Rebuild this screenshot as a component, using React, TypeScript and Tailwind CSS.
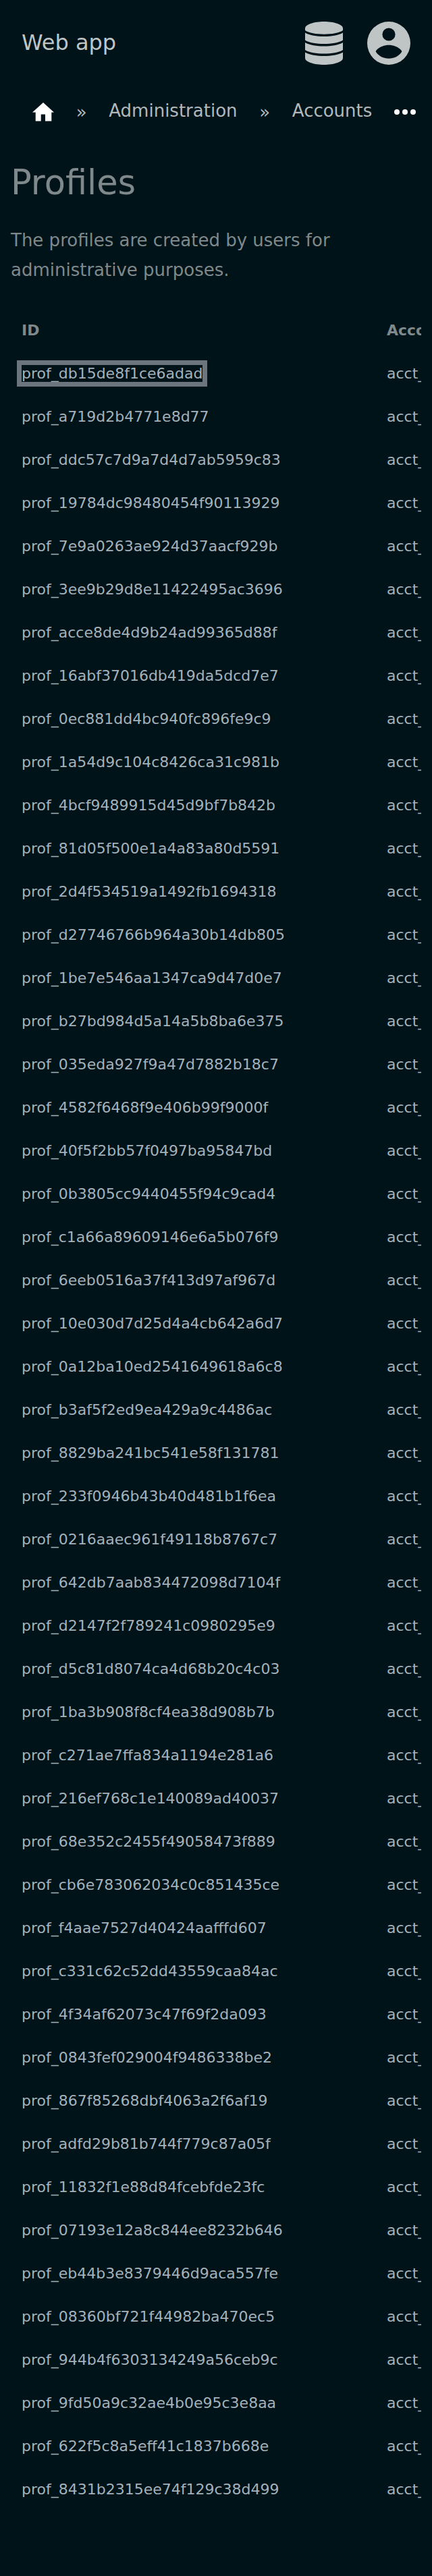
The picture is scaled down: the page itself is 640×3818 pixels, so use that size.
import React from "react";

const ids = [
  "db15de8f1ce6adad", "a719d2b4771e8d77", "ddc57c7d9a7d4d7ab5959c83", "19784dc98480454f90113929",
  "7e9a0263ae924d37aacf929b", "3ee9b29d8e11422495ac3696", "acce8de4d9b24ad99365d88f", "16abf37016db419da5dcd7e7",
  "0ec881dd4bc940fc896fe9c9", "1a54d9c104c8426ca31c981b", "4bcf9489915d45d9bf7b842b", "81d05f500e1a4a83a80d5591",
  "2d4f534519a1492fb1694318", "d27746766b964a30b14db805", "1be7e546aa1347ca9d47d0e7", "b27bd984d5a14a5b8ba6e375",
  "035eda927f9a47d7882b18c7", "4582f6468f9e406b99f9000f", "40f5f2bb57f0497ba95847bd", "0b3805cc9440455f94c9cad4",
  "c1a66a89609146e6a5b076f9", "6eeb0516a37f413d97af967d", "10e030d7d25d4a4cb642a6d7", "0a12ba10ed2541649618a6c8",
  "b3af5f2ed9ea429a9c4486ac", "8829ba241bc541e58f131781", "233f0946b43b40d481b1f6ea", "0216aaec961f49118b8767c7",
  "642db7aab834472098d7104f", "d2147f2f789241c0980295e9", "d5c81d8074ca4d68b20c4c03", "1ba3b908f8cf4ea38d908b7b",
  "c271ae7ffa834a1194e281a6", "216ef768c1e140089ad40037", "68e352c2455f49058473f889", "cb6e783062034c0c851435ce",
  "f4aae7527d40424aafffd607", "c331c62c52dd43559caa84ac", "4f34af62073c47f69f2da093", "0843fef029004f9486338be2",
  "867f85268dbf4063a2f6af19", "adfd29b81b744f779c87a05f", "11832f1e88d84fcebfde23fc", "07193e12a8c844ee8232b646",
  "eb44b3e8379446d9aca557fe", "08360bf721f44982ba470ec5", "944b4f6303134249a56ceb9c", "9fd50a9c32ae4b0e95c3e8aa",
  "622f5c8a5eff41c1837b668e", "8431b2315ee74f129c38d499",
];

function DatabaseIcon() {
  return (
    <svg viewBox="0 0 56 64" className="h-16 w-14" fill="currentColor" aria-hidden="true">
      <path d="M28 0C42 0 56 4 56 10V13C50 17 40 18.700 28 18.700S6 17 0 13V10C0 4 14 0 28 0Z" />
      <path d="M0 16.500C7 20.500 17 22 28 22S49 20.500 56 16.500V27.500C50 31.500 39 33 28 33S6 31.500 0 27.500Z" />
      <path d="M0 31C7 35 17 36.500 28 36.500S49 35 56 31V42C50 46 39 47.500 28 47.500S6 46 0 42Z" />
      <path d="M0 45.500C7 49.500 17 51 28 51S49 49.500 56 45.500V54C56 60 42 64 28 64S0 60 0 54Z" />
    </svg>
  );
}

function AccountIcon() {
  return (
    <svg viewBox="0 0 64 64" className="size-16" aria-hidden="true">
      <path fill="currentColor" fillRule="evenodd" d="M32 0A32 32 0 1 1 32 64A32 32 0 1 1 32 0ZM32 9.400A9.600 9.600 0 1 0 32 28.600A9.600 9.600 0 1 0 32 9.400ZM13 43.200Q12.500 44 13 45C17 51 24 54.800 32 54.800S47 51 51 45Q51.500 44 51 43.200C46 37 38 34.700 32 34.700S18 37 13 43.200Z" />
    </svg>
  );
}

export default function App() {
  return (
    <div className="min-h-screen bg-[#001318] pb-24 font-['DejaVu_Sans',sans-serif] text-[#7f898b]">
      <header className="flex h-32 items-center justify-between px-8 text-[#bfc4c5]">
        <a href="#" className="pb-0.5 text-[32px]">Web app</a>
        <div className="flex gap-9">
          <button type="button" aria-label="Data"><DatabaseIcon /></button>
          <button type="button" aria-label="Account"><AccountIcon /></button>
        </div>
      </header>
      <nav aria-label="Breadcrumb" className="flex h-[76px] items-center justify-between pl-12 pr-6 text-[26px] text-[#b2b8ba]">
        <a href="#" aria-label="Home" className="text-white">
          <svg viewBox="0 0 32 28" className="h-7 w-8" fill="currentColor" aria-hidden="true">
            <path d="M16 0L32 14.500H28.300V27.500H19V17.500H12.700V27.500H4.700V14.500H0Z" />
          </svg>
        </a>
        <span>»</span>
        <a href="#" className="pb-1">Administration</a>
        <span>»</span>
        <a href="#" className="pb-1">Accounts</a>
        <button type="button" aria-label="More" className="text-white">
          <svg viewBox="0 0 32 8" className="h-2 w-8" fill="currentColor" aria-hidden="true">
            <circle cx="4" cy="4" r="4" /><circle cx="16" cy="4" r="4" /><circle cx="28" cy="4" r="4" />
          </svg>
        </button>
      </nav>
      <main className="px-4">
        <h1 className="pt-7 text-[51px] leading-[78px]">Profiles</h1>
        <p className="mt-6 text-[26px] leading-[44px]">The profiles are created by users for administrative purposes.</p>
        <div className="mt-9 overflow-hidden">
          <table className="w-full table-fixed text-left text-[22px] leading-8">
            <thead>
              <tr className="h-16">
                <th className="w-[541px] px-4">ID</th>
                <th className="whitespace-nowrap pl-4">Account</th>
              </tr>
            </thead>
            <tbody className="text-[#a5b1ba]">
              {ids.map((id, i) => (
                <tr key={id} className="h-16">
                  <td className="px-4">
                    <a href="#" className={i === 0 ? "outline-7 outline-[#6c757d]" : ""}>prof_{id}</a>
                  </td>
                  <td className="whitespace-nowrap pl-4">acct_{id}</td>
                </tr>
              ))}
            </tbody>
          </table>
        </div>
      </main>
    </div>
  );
}
